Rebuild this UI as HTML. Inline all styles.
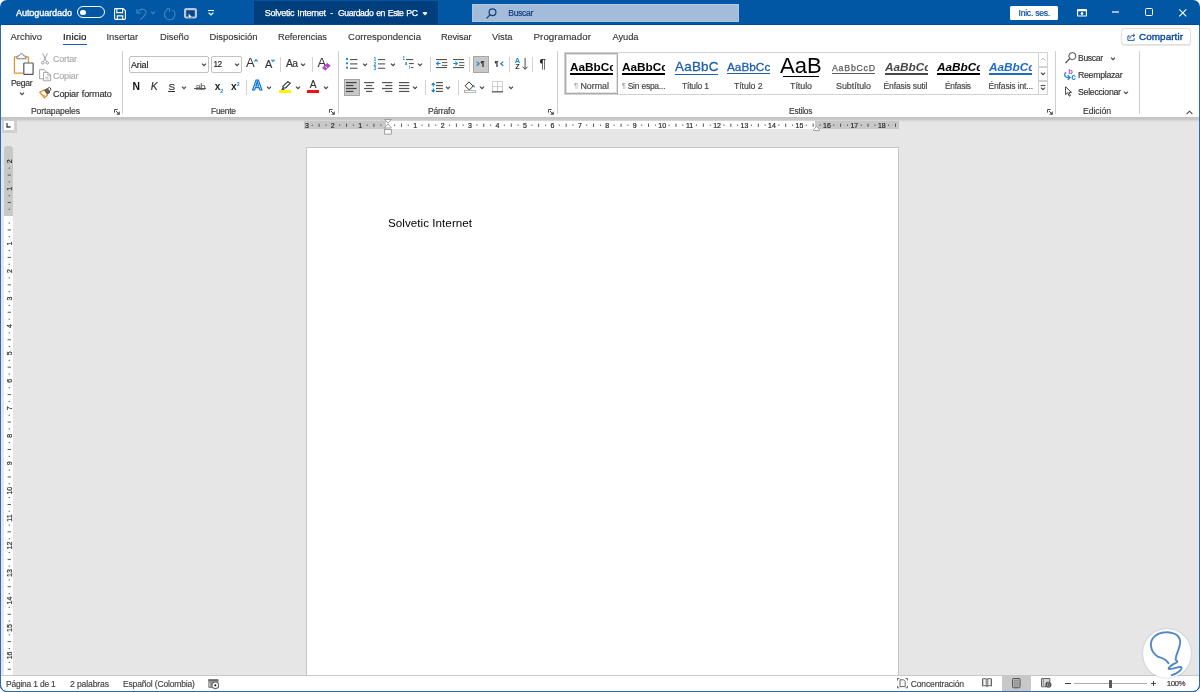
<!DOCTYPE html>
<html lang="es"><head><meta charset="utf-8"><title>Solvetic Internet - Word</title>
<style>
html,body{margin:0;padding:0;background:#fff;}
body{width:1200px;height:692px;overflow:hidden;position:relative;font-family:'Liberation Sans',sans-serif;}
#win{position:absolute;left:0;top:0;width:1200px;height:692px;background:#0157A3;border-radius:7px;overflow:hidden;will-change:transform;}
.t{position:absolute;white-space:pre;height:16px;line-height:16px;}
.r{position:absolute;}
.i{position:absolute;overflow:visible;}
#ribbon{position:absolute;left:1px;top:25.3px;width:1198px;height:91.7px;background:#fff;}
#doc{position:absolute;left:1px;top:117px;width:1198px;height:559px;background:#e6e6e6;}
#status{position:absolute;left:1px;top:675px;width:1198px;height:15.9px;background:#fff;border-top:1px solid #c8c8c8;box-sizing:border-box;border-radius:0 0 6px 6px;}
.clip{position:absolute;overflow:hidden;}
</style></head><body><div id="win">
<div class="r" style="left:0px;top:24px;width:1200px;height:1.4px;background:#014A8F;"></div><div class="r" style="left:254.2px;top:0.8px;width:183.6px;height:23.4px;background:#003E7D;"></div><span class="t" style="left:16.0px;top:5.0px;font-size:9.14px;color:#fff;font-weight:400;font-style:normal;font-family:'Liberation Sans',sans-serif;letter-spacing:-0.12px;-webkit-text-stroke:0.3px #fff;">Autoguardado</span><div class="r" style="left:77.3px;top:6.4px;width:27.4px;height:11.7px;border:1.3px solid #fff;border-radius:7px;box-sizing:border-box"></div><div class="r" style="left:80.2px;top:9.5px;width:5.6px;height:5.6px;border-radius:3px;background:#fff"></div><span class="t" style="left:264.8px;top:5.0px;font-size:9.01px;color:#fff;font-weight:400;font-style:normal;font-family:'Liberation Sans',sans-serif;letter-spacing:-0.26px;-webkit-text-stroke:0.25px #fff;word-spacing:0.8px;">Solvetic Internet</span><span class="t" style="left:330.3px;top:5.0px;font-size:9px;color:#fff;font-weight:400;font-style:normal;font-family:'Liberation Sans',sans-serif;letter-spacing:0.00px;-webkit-text-stroke:0.16px #fff;">-</span><span class="t" style="left:338.0px;top:5.0px;font-size:8.71px;color:#fff;font-weight:400;font-style:normal;font-family:'Liberation Sans',sans-serif;letter-spacing:-0.42px;-webkit-text-stroke:0.25px #fff;word-spacing:0.8px;">Guardado en Este PC</span><svg class="i" style="left:422px;top:11.9px;" width="6" height="4" viewBox="0 0 6 4"><path d="M1 0.7 L3 2.7 L5 0.7" fill="none" stroke="#fff" stroke-width="1.2"/></svg><div class="r" style="left:471.8px;top:4.3px;width:267.4px;height:17.6px;background:#A2BCD9;box-shadow:inset 0 0 0 0.8px #B4C8E0"></div><span class="t" style="left:508.3px;top:5.0px;font-size:8.59px;color:#153E7E;font-weight:400;font-style:normal;font-family:'Liberation Sans',sans-serif;letter-spacing:-0.34px;-webkit-text-stroke:0.2px #153E7E;">Buscar</span><div class="r" style="left:1010px;top:5.8px;width:48.3px;height:13.9px;background:#fff;border-radius:1.5px"></div><span class="t" style="left:1018.5px;top:4.9px;font-size:8.59px;color:#04509A;font-weight:400;font-style:normal;font-family:'Liberation Sans',sans-serif;letter-spacing:-0.24px;-webkit-text-stroke:0.2px #04509A;">Inic. ses.</span><div id="ribbon"></div><div class="r" style="left:0px;top:26px;width:1px;height:666px;background:#2A6CB2;"></div><div class="r" style="left:1199px;top:26px;width:1px;height:666px;background:#2A6CB2;"></div><span class="t" style="left:10.5px;top:29.0px;font-size:9.47px;color:#333;font-weight:400;font-style:normal;font-family:'Liberation Sans',sans-serif;letter-spacing:-0.01px;-webkit-text-stroke:0.12px #333;">Archivo</span><span class="t" style="left:63.0px;top:29.0px;font-size:9.83px;color:#1a1a1a;font-weight:400;font-style:normal;font-family:'Liberation Sans',sans-serif;letter-spacing:0.11px;-webkit-text-stroke:0.22px #1a1a1a;">Inicio</span><span class="t" style="left:106.5px;top:29.0px;font-size:9.37px;color:#333;font-weight:400;font-style:normal;font-family:'Liberation Sans',sans-serif;letter-spacing:-0.03px;-webkit-text-stroke:0.12px #333;">Insertar</span><span class="t" style="left:160.0px;top:29.0px;font-size:9.39px;color:#333;font-weight:400;font-style:normal;font-family:'Liberation Sans',sans-serif;letter-spacing:-0.04px;-webkit-text-stroke:0.12px #333;">Diseño</span><span class="t" style="left:209.5px;top:29.0px;font-size:9.43px;color:#333;font-weight:400;font-style:normal;font-family:'Liberation Sans',sans-serif;letter-spacing:-0.02px;-webkit-text-stroke:0.12px #333;">Disposición</span><span class="t" style="left:278.0px;top:29.0px;font-size:9.31px;color:#333;font-weight:400;font-style:normal;font-family:'Liberation Sans',sans-serif;letter-spacing:-0.06px;-webkit-text-stroke:0.12px #333;">Referencias</span><span class="t" style="left:348.0px;top:29.0px;font-size:9.55px;color:#333;font-weight:400;font-style:normal;font-family:'Liberation Sans',sans-serif;letter-spacing:0.02px;-webkit-text-stroke:0.12px #333;">Correspondencia</span><span class="t" style="left:441.0px;top:29.0px;font-size:9.2px;color:#333;font-weight:400;font-style:normal;font-family:'Liberation Sans',sans-serif;letter-spacing:-0.11px;-webkit-text-stroke:0.12px #333;">Revisar</span><span class="t" style="left:492.0px;top:29.0px;font-size:9.38px;color:#333;font-weight:400;font-style:normal;font-family:'Liberation Sans',sans-serif;letter-spacing:-0.05px;-webkit-text-stroke:0.12px #333;">Vista</span><span class="t" style="left:533.5px;top:29.0px;font-size:9.71px;color:#333;font-weight:400;font-style:normal;font-family:'Liberation Sans',sans-serif;letter-spacing:0.09px;-webkit-text-stroke:0.12px #333;">Programador</span><span class="t" style="left:612.5px;top:29.0px;font-size:9.34px;color:#333;font-weight:400;font-style:normal;font-family:'Liberation Sans',sans-serif;letter-spacing:-0.07px;-webkit-text-stroke:0.12px #333;">Ayuda</span><div class="r" style="left:63px;top:43.5px;width:24.2px;height:1.8px;background:#185ABD;"></div><div class="r" style="left:1121.2px;top:27.5px;width:69.4px;height:17.5px;border:1px solid #e0e0e0;border-radius:3.5px;box-sizing:border-box;background:#fff;box-shadow:0 0.8px 1px rgba(0,0,0,.10)"></div><span class="t" style="left:1139.0px;top:28.6px;font-size:9.9px;color:#114E9E;font-weight:400;font-style:normal;font-family:'Liberation Sans',sans-serif;letter-spacing:0.08px;-webkit-text-stroke:0.42px #114E9E;">Compartir</span><span class="t" style="left:31.0px;top:103.3px;font-size:8.58px;color:#3a3a3a;font-weight:400;font-style:normal;font-family:'Liberation Sans',sans-serif;letter-spacing:-0.14px;-webkit-text-stroke:0.16px #3a3a3a;">Portapapeles</span><span class="t" style="left:211.0px;top:103.3px;font-size:8.4px;color:#3a3a3a;font-weight:400;font-style:normal;font-family:'Liberation Sans',sans-serif;letter-spacing:-0.22px;-webkit-text-stroke:0.16px #3a3a3a;">Fuente</span><span class="t" style="left:428.0px;top:103.3px;font-size:8.53px;color:#3a3a3a;font-weight:400;font-style:normal;font-family:'Liberation Sans',sans-serif;letter-spacing:-0.16px;-webkit-text-stroke:0.16px #3a3a3a;">Párrafo</span><span class="t" style="left:789.0px;top:103.3px;font-size:8.37px;color:#3a3a3a;font-weight:400;font-style:normal;font-family:'Liberation Sans',sans-serif;letter-spacing:-0.19px;-webkit-text-stroke:0.16px #3a3a3a;">Estilos</span><span class="t" style="left:1083.0px;top:103.3px;font-size:8.72px;color:#3a3a3a;font-weight:400;font-style:normal;font-family:'Liberation Sans',sans-serif;letter-spacing:-0.10px;-webkit-text-stroke:0.16px #3a3a3a;">Edición</span><div class="r" style="left:122.0px;top:50.5px;width:1px;height:63.5px;background:#cfcfcf;"></div><div class="r" style="left:337.5px;top:50.5px;width:1px;height:63.5px;background:#cfcfcf;"></div><div class="r" style="left:556.5px;top:50.5px;width:1px;height:63.5px;background:#cfcfcf;"></div><div class="r" style="left:1055.0px;top:50.5px;width:1px;height:63.5px;background:#cfcfcf;"></div><div class="r" style="left:1139.0px;top:50.5px;width:1px;height:63.5px;background:#cfcfcf;"></div><span class="t" style="left:11.0px;top:75.0px;font-size:8.6px;color:#333;font-weight:400;font-style:normal;font-family:'Liberation Sans',sans-serif;letter-spacing:-0.36px;-webkit-text-stroke:0.16px #333;">Pegar</span><svg class="i" style="left:19px;top:92.4px;" width="6" height="4" viewBox="0 0 6 4"><path d="M1 0.7 L3 2.7 L5 0.7" fill="none" stroke="#444" stroke-width="1.2"/></svg><span class="t" style="left:53.0px;top:51.0px;font-size:8.97px;color:#ababab;font-weight:400;font-style:normal;font-family:'Liberation Sans',sans-serif;letter-spacing:-0.18px;-webkit-text-stroke:0.16px #ababab;">Cortar</span><span class="t" style="left:53.0px;top:68.2px;font-size:8.98px;color:#ababab;font-weight:400;font-style:normal;font-family:'Liberation Sans',sans-serif;letter-spacing:-0.18px;-webkit-text-stroke:0.16px #ababab;">Copiar</span><span class="t" style="left:53.0px;top:85.8px;font-size:9.07px;color:#2e2e2e;font-weight:400;font-style:normal;font-family:'Liberation Sans',sans-serif;letter-spacing:-0.14px;word-spacing:0.6px;-webkit-text-stroke:0.16px #2e2e2e;">Copiar formato</span><div class="r" style="left:128.5px;top:56px;width:80.5px;height:16.5px;border:1px solid #c2c2c2;border-radius:2px;box-sizing:border-box;background:#fff"></div><div class="r" style="left:211px;top:56px;width:31px;height:16.5px;border:1px solid #c2c2c2;border-radius:2px;box-sizing:border-box;background:#fff"></div><span class="t" style="left:131.0px;top:57.0px;font-size:9.01px;color:#222;font-weight:400;font-style:normal;font-family:'Liberation Sans',sans-serif;letter-spacing:-0.15px;-webkit-text-stroke:0.16px #222;">Arial</span><span class="t" style="left:213.5px;top:57.0px;font-size:8.21px;color:#222;font-weight:400;font-style:normal;font-family:'Liberation Sans',sans-serif;letter-spacing:-0.60px;-webkit-text-stroke:0.16px #222;">12</span><svg class="i" style="left:201.4px;top:63.1px;" width="6" height="4" viewBox="0 0 6 4"><path d="M1 0.7 L3 2.7 L5 0.7" fill="none" stroke="#444" stroke-width="1.2"/></svg><svg class="i" style="left:234px;top:63.1px;" width="6" height="4" viewBox="0 0 6 4"><path d="M1 0.7 L3 2.7 L5 0.7" fill="none" stroke="#444" stroke-width="1.2"/></svg><span class="t" style="left:246.0px;top:54.7px;font-size:13px;color:#333;font-weight:400;font-style:normal;font-family:'Liberation Sans',sans-serif;letter-spacing:0.00px;">A</span><span class="t" style="left:265.0px;top:55.5px;font-size:10.9px;color:#333;font-weight:400;font-style:normal;font-family:'Liberation Sans',sans-serif;letter-spacing:0.00px;-webkit-text-stroke:0.16px #333;">A</span><div class="r" style="left:279.5px;top:56.6px;width:1px;height:15px;background:#d2d2d2;"></div><span class="t" style="left:286.0px;top:55.7px;font-size:10.3px;color:#333;font-weight:400;font-style:normal;font-family:'Liberation Sans',sans-serif;letter-spacing:-0.60px;-webkit-text-stroke:0.16px #333;">Aa</span><svg class="i" style="left:299.7px;top:63.1px;" width="6" height="4" viewBox="0 0 6 4"><path d="M1 0.7 L3 2.7 L5 0.7" fill="none" stroke="#444" stroke-width="1.2"/></svg><div class="r" style="left:312.3px;top:56.6px;width:1px;height:15px;background:#d2d2d2;"></div><span class="t" style="left:317.6px;top:54.7px;font-size:13px;color:#333;font-weight:400;font-style:normal;font-family:'Liberation Sans',sans-serif;letter-spacing:0.00px;">A</span><span class="t" style="left:132.4px;top:79.0px;font-size:10.3px;color:#111;font-weight:700;font-style:normal;font-family:'Liberation Sans',sans-serif;letter-spacing:0.00px;">N</span><span class="t" style="left:150.7px;top:79.0px;font-size:10.4px;color:#333;font-weight:400;font-style:italic;font-family:'Liberation Sans',sans-serif;letter-spacing:0.00px;-webkit-text-stroke:0.16px #333;">K</span><span class="t" style="left:168.6px;top:78.8px;font-size:9.9px;color:#333;font-weight:400;font-style:normal;font-family:'Liberation Sans',sans-serif;letter-spacing:0.00px;-webkit-text-stroke:0.16px #333;">S</span><div class="r" style="left:168.4px;top:91.2px;width:6.4px;height:0.9px;background:#333;"></div><svg class="i" style="left:181.2px;top:85.7px;" width="6" height="4" viewBox="0 0 6 4"><path d="M1 0.7 L3 2.7 L5 0.7" fill="none" stroke="#444" stroke-width="1.2"/></svg><span class="t" style="left:195.6px;top:79.3px;font-size:9.6px;color:#666;font-weight:400;font-style:normal;font-family:'Liberation Sans',sans-serif;letter-spacing:-0.60px;-webkit-text-stroke:0.16px #666;">ab</span><div class="r" style="left:194.3px;top:88px;width:11.7px;height:0.8px;background:#555;"></div><span class="t" style="left:214.7px;top:79.3px;font-size:10.2px;color:#222;font-weight:700;font-style:normal;font-family:'Liberation Sans',sans-serif;letter-spacing:0.00px;">x</span><span class="t" style="left:220.2px;top:83.3px;font-size:5.4px;color:#1A85DD;font-weight:700;font-style:normal;font-family:'Liberation Sans',sans-serif;letter-spacing:0.00px;">2</span><span class="t" style="left:231.0px;top:79.3px;font-size:10.2px;color:#222;font-weight:700;font-style:normal;font-family:'Liberation Sans',sans-serif;letter-spacing:0.00px;">x</span><span class="t" style="left:236.8px;top:75.6px;font-size:5.4px;color:#1A85DD;font-weight:700;font-style:normal;font-family:'Liberation Sans',sans-serif;letter-spacing:0.00px;">2</span><div class="r" style="left:245.5px;top:80.3px;width:1px;height:15px;background:#d2d2d2;"></div><span class="t" style="left:252.2px;top:78.4px;font-size:13.8px;color:#fff;font-weight:700;font-style:normal;font-family:'Liberation Sans',sans-serif;letter-spacing:0.00px;-webkit-text-stroke:1.2px #0F74D4;">A</span><svg class="i" style="left:265.5px;top:85.7px;" width="6" height="4" viewBox="0 0 6 4"><path d="M1 0.7 L3 2.7 L5 0.7" fill="none" stroke="#444" stroke-width="1.2"/></svg><div class="r" style="left:279px;top:90px;width:12.1px;height:3px;background:#FFF200;"></div><svg class="i" style="left:294.7px;top:85.7px;" width="6" height="4" viewBox="0 0 6 4"><path d="M1 0.7 L3 2.7 L5 0.7" fill="none" stroke="#444" stroke-width="1.2"/></svg><span class="t" style="left:309.8px;top:77.3px;font-size:10.2px;color:#333;font-weight:400;font-style:normal;font-family:'Liberation Sans',sans-serif;letter-spacing:0.00px;-webkit-text-stroke:0.16px #333;">A</span><div class="r" style="left:307.2px;top:90px;width:11.8px;height:3px;background:#F01010;"></div><svg class="i" style="left:322.8px;top:85.7px;" width="6" height="4" viewBox="0 0 6 4"><path d="M1 0.7 L3 2.7 L5 0.7" fill="none" stroke="#444" stroke-width="1.2"/></svg><div class="r" style="left:473px;top:56px;width:16px;height:16.5px;background:#c8c8c8;border:1px solid #a6a6a6;box-sizing:border-box"></div><div class="r" style="left:344px;top:79.2px;width:15.8px;height:16.5px;background:#c8c8c8;border:1px solid #a6a6a6;box-sizing:border-box"></div><div class="r" style="left:429.5px;top:56.5px;width:1px;height:15px;background:#d2d2d2;"></div><div class="r" style="left:469.2px;top:56.5px;width:1px;height:15px;background:#d2d2d2;"></div><div class="r" style="left:509.3px;top:56.5px;width:1px;height:15px;background:#d2d2d2;"></div><div class="r" style="left:532.0px;top:56.5px;width:1px;height:15px;background:#d2d2d2;"></div><div class="r" style="left:425.1px;top:80.3px;width:1px;height:15px;background:#d2d2d2;"></div><div class="r" style="left:457.8px;top:80.3px;width:1px;height:15px;background:#d2d2d2;"></div><svg class="i" style="left:361.6px;top:62.699999999999996px;" width="6" height="4" viewBox="0 0 6 4"><path d="M1 0.7 L3 2.7 L5 0.7" fill="none" stroke="#444" stroke-width="1.2"/></svg><svg class="i" style="left:390px;top:62.699999999999996px;" width="6" height="4" viewBox="0 0 6 4"><path d="M1 0.7 L3 2.7 L5 0.7" fill="none" stroke="#444" stroke-width="1.2"/></svg><svg class="i" style="left:416.8px;top:62.699999999999996px;" width="6" height="4" viewBox="0 0 6 4"><path d="M1 0.7 L3 2.7 L5 0.7" fill="none" stroke="#444" stroke-width="1.2"/></svg><svg class="i" style="left:412.4px;top:85.7px;" width="6" height="4" viewBox="0 0 6 4"><path d="M1 0.7 L3 2.7 L5 0.7" fill="none" stroke="#444" stroke-width="1.2"/></svg><svg class="i" style="left:444.8px;top:85.7px;" width="6" height="4" viewBox="0 0 6 4"><path d="M1 0.7 L3 2.7 L5 0.7" fill="none" stroke="#444" stroke-width="1.2"/></svg><svg class="i" style="left:479.3px;top:85.7px;" width="6" height="4" viewBox="0 0 6 4"><path d="M1 0.7 L3 2.7 L5 0.7" fill="none" stroke="#444" stroke-width="1.2"/></svg><svg class="i" style="left:507.5px;top:85.7px;" width="6" height="4" viewBox="0 0 6 4"><path d="M1 0.7 L3 2.7 L5 0.7" fill="none" stroke="#444" stroke-width="1.2"/></svg><svg class="i" style="left:349.6px;top:58.7px;" width="10" height="13.049999999999999" viewBox="0 0 10 13.049999999999999"><rect x="0" y="0.0" width="7.5" height="1.1" fill="#555"/><rect x="0" y="4.35" width="7.5" height="1.1" fill="#555"/><rect x="0" y="8.7" width="7.5" height="1.1" fill="#555"/></svg><svg class="i" style="left:346px;top:58.3px;" width="2" height="13.049999999999999" viewBox="0 0 2 13.049999999999999"><rect x="0" y="0.0" width="2" height="1.9" fill="#1A85DD"/><rect x="0" y="4.35" width="2" height="1.9" fill="#1A85DD"/><rect x="0" y="8.7" width="2" height="1.9" fill="#1A85DD"/></svg><svg class="i" style="left:378px;top:58.7px;" width="10" height="13.049999999999999" viewBox="0 0 10 13.049999999999999"><rect x="0" y="0.0" width="7.2" height="1.1" fill="#555"/><rect x="0" y="4.35" width="7.2" height="1.1" fill="#555"/><rect x="0" y="8.7" width="7.2" height="1.1" fill="#555"/></svg><span class="t" style="left:373.6px;top:51.3px;font-size:5.2px;color:#1A85DD;font-weight:700;font-style:normal;font-family:'Liberation Sans',sans-serif;letter-spacing:0.00px;">1</span><span class="t" style="left:373.6px;top:55.6px;font-size:5.2px;color:#1A85DD;font-weight:700;font-style:normal;font-family:'Liberation Sans',sans-serif;letter-spacing:0.00px;">2</span><span class="t" style="left:373.6px;top:60.0px;font-size:5.2px;color:#1A85DD;font-weight:700;font-style:normal;font-family:'Liberation Sans',sans-serif;letter-spacing:0.00px;">3</span><svg class="i" style="left:406.2px;top:58.7px;" width="10" height="4.35" viewBox="0 0 10 4.35"><rect x="0" y="0.0" width="7.2" height="1.1" fill="#555"/></svg><svg class="i" style="left:408.6px;top:63.05px;" width="10" height="4.35" viewBox="0 0 10 4.35"><rect x="0" y="0.0" width="4.8" height="1.1" fill="#555"/></svg><svg class="i" style="left:411.4px;top:67.4px;" width="10" height="4.35" viewBox="0 0 10 4.35"><rect x="0" y="0.0" width="2.4" height="1.1" fill="#555"/></svg><span class="t" style="left:402.6px;top:51.3px;font-size:4.6px;color:#1A85DD;font-weight:700;font-style:normal;font-family:'Liberation Sans',sans-serif;letter-spacing:0.00px;">1</span><span class="t" style="left:404.8px;top:55.6px;font-size:4.6px;color:#1A85DD;font-weight:700;font-style:normal;font-family:'Liberation Sans',sans-serif;letter-spacing:0.00px;">a</span><span class="t" style="left:409.0px;top:60.0px;font-size:4.6px;color:#1A85DD;font-weight:700;font-style:normal;font-family:'Liberation Sans',sans-serif;letter-spacing:0.00px;">i</span><svg class="i" style="left:436px;top:58.7px;" width="10" height="2.9" viewBox="0 0 10 2.9"><rect x="0" y="0.0" width="11" height="1.1" fill="#555"/></svg><svg class="i" style="left:441.6px;top:61.6px;" width="10" height="5.8" viewBox="0 0 10 5.8"><rect x="0" y="0.0" width="5.4" height="1.1" fill="#666"/><rect x="0" y="2.9" width="5.4" height="1.1" fill="#666"/></svg><svg class="i" style="left:436px;top:67.4px;" width="10" height="2.9" viewBox="0 0 10 2.9"><rect x="0" y="0.0" width="11" height="1.1" fill="#555"/></svg><svg class="i" style="left:436.2px;top:61.2px;" width="5" height="5" viewBox="0 0 5 5"><path d="M4.6 2.5H0.9M2.5 0.6L0.6 2.5L2.5 4.4" fill="none" stroke="#1A85DD" stroke-width="1.1"/></svg><svg class="i" style="left:453.2px;top:58.7px;" width="10" height="2.9" viewBox="0 0 10 2.9"><rect x="0" y="0.0" width="11" height="1.1" fill="#555"/></svg><svg class="i" style="left:458.8px;top:61.6px;" width="10" height="5.8" viewBox="0 0 10 5.8"><rect x="0" y="0.0" width="5.4" height="1.1" fill="#666"/><rect x="0" y="2.9" width="5.4" height="1.1" fill="#666"/></svg><svg class="i" style="left:453.2px;top:67.4px;" width="10" height="2.9" viewBox="0 0 10 2.9"><rect x="0" y="0.0" width="11" height="1.1" fill="#555"/></svg><svg class="i" style="left:453.4px;top:61.2px;" width="5" height="5" viewBox="0 0 5 5"><path d="M0.3 2.5H4M2.4 0.6L4.3 2.5L2.4 4.4" fill="none" stroke="#1A85DD" stroke-width="1.1"/></svg><span class="t" style="left:480.6px;top:56.3px;font-size:7.6px;color:#222;font-weight:700;font-style:normal;font-family:'Liberation Sans',sans-serif;letter-spacing:0.00px;">¶</span><svg class="i" style="left:476.4px;top:61.4px;" width="4" height="5.4" viewBox="0 0 4 5.4"><path d="M0.6 0.6L3.2 2.7L0.6 4.8" fill="none" stroke="#1A85DD" stroke-width="1.2"/></svg><span class="t" style="left:494.5px;top:56.3px;font-size:7.6px;color:#222;font-weight:700;font-style:normal;font-family:'Liberation Sans',sans-serif;letter-spacing:0.00px;">¶</span><svg class="i" style="left:500px;top:61.4px;" width="4" height="5.4" viewBox="0 0 4 5.4"><path d="M3.3 0.6L0.7 2.7L3.3 4.8" fill="none" stroke="#1A85DD" stroke-width="1.2"/></svg><span class="t" style="left:514.8px;top:52.8px;font-size:7.4px;color:#1A85DD;font-weight:700;font-style:normal;font-family:'Liberation Sans',sans-serif;letter-spacing:0.00px;">A</span><span class="t" style="left:515.2px;top:59.4px;font-size:7.2px;color:#333;font-weight:700;font-style:normal;font-family:'Liberation Sans',sans-serif;letter-spacing:0.00px;">Z</span><svg class="i" style="left:521.5px;top:58px;" width="6.4" height="12" viewBox="0 0 6.4 12"><path d="M3.1 0V11.2M0.5 8.6L3.1 11.3L5.7 8.6" fill="none" stroke="#444" stroke-width="1"/></svg><span class="t" style="left:539.6px;top:56.0px;font-size:12px;color:#222;font-weight:400;font-style:normal;font-family:'Liberation Sans',sans-serif;letter-spacing:0.00px;">¶</span><svg class="i" style="left:346.4px;top:82px;" width="10" height="11.8" viewBox="0 0 10 11.8"><rect x="0" y="0.0" width="10.6" height="1.2" fill="#444"/><rect x="0" y="2.95" width="7.4" height="1.2" fill="#444"/><rect x="0" y="5.9" width="10.6" height="1.2" fill="#444"/><rect x="0" y="8.850000000000001" width="7.4" height="1.2" fill="#444"/></svg><svg class="i" style="left:364px;top:82px;" width="10.2" height="11.8" viewBox="0 0 10.2 11.8"><rect x="0.0" y="0.0" width="10.2" height="1.2" fill="#555"/><rect x="1.9999999999999996" y="2.95" width="6.2" height="1.2" fill="#555"/><rect x="0.0" y="5.9" width="10.2" height="1.2" fill="#555"/><rect x="1.9999999999999996" y="8.850000000000001" width="6.2" height="1.2" fill="#555"/></svg><svg class="i" style="left:381.5px;top:82px;" width="10.3" height="11.8" viewBox="0 0 10.3 11.8"><rect x="0.0" y="0.0" width="10.3" height="1.2" fill="#555"/><rect x="3.200000000000001" y="2.95" width="7.1" height="1.2" fill="#555"/><rect x="0.0" y="5.9" width="10.3" height="1.2" fill="#555"/><rect x="3.200000000000001" y="8.850000000000001" width="7.1" height="1.2" fill="#555"/></svg><svg class="i" style="left:398.7px;top:82px;" width="10.3" height="11.8" viewBox="0 0 10.3 11.8"><rect x="0" y="0.0" width="10.3" height="1.2" fill="#555"/><rect x="0" y="2.95" width="10.3" height="1.2" fill="#555"/><rect x="0" y="5.9" width="10.3" height="1.2" fill="#555"/><rect x="0" y="8.850000000000001" width="10.3" height="1.2" fill="#555"/></svg><svg class="i" style="left:435.9px;top:82px;" width="6.9" height="11.8" viewBox="0 0 6.9 11.8"><rect x="0" y="0.0" width="6.9" height="1.2" fill="#555"/><rect x="0" y="2.95" width="6.9" height="1.2" fill="#555"/><rect x="0" y="5.9" width="6.9" height="1.2" fill="#555"/><rect x="0" y="8.850000000000001" width="6.9" height="1.2" fill="#555"/></svg><svg class="i" style="left:430.6px;top:81.8px;" width="4.6" height="11" viewBox="0 0 4.6 11"><path d="M2.3 1V4.6M2.3 6.4V10" stroke="#1A85DD" stroke-width="1.2"/><path d="M0 3L2.3 0.2L4.6 3Z M0 8L2.3 10.8L4.6 8Z" fill="#1A85DD"/></svg><svg class="i" style="left:463.8px;top:81px;" width="12" height="12" viewBox="0 0 12 12"><path d="M5 0.8L9.2 5.2L5.2 9L1.2 4.8Z" fill="#fff" stroke="#333" stroke-width="1"/><path d="M9.6 3.4C10.6 4.6 11 5.6 10.8 7.2C10.2 6.2 9.8 6 9 5.6Z" fill="#1A85DD"/><rect x="0.4" y="9.6" width="11" height="2.1" fill="#fff" stroke="#999" stroke-width="0.7"/></svg><svg class="i" style="left:492px;top:81.2px;" width="11" height="11.6" viewBox="0 0 11 11.6"><path d="M0.5 0.4V11M10.5 0.4V11M0.5 0.5H10.5M5.5 0.5V11M0.5 5.6H10.5" fill="none" stroke="#c4c4c4" stroke-width="0.8"/><path d="M0 10.8H11" stroke="#555" stroke-width="1.3"/></svg><div class="r" style="left:564px;top:51.5px;width:484px;height:43.5px;border:1px solid #d2d2d2;box-sizing:border-box;background:#fff"></div><div class="r" style="left:565.3px;top:53px;width:52.5px;height:41px;border:1.5px solid #ababab;box-sizing:border-box;background:#fff;box-shadow:inset 0 0 0 1px #e2e2e2"></div><div class="r" style="left:1037.5px;top:51.5px;width:10.5px;height:15px;border:1px solid #d2d2d2;box-sizing:border-box;background:#fff"></div><div class="r" style="left:1037.5px;top:66.5px;width:10.5px;height:14.5px;border:1px solid #d2d2d2;box-sizing:border-box;background:#fff"></div><div class="r" style="left:1037.5px;top:81px;width:10.5px;height:14px;border:1px solid #d2d2d2;box-sizing:border-box;background:#fff"></div><svg class="i" style="left:1040px;top:57.3px;" width="6" height="4" viewBox="0 0 6 4"><path d="M1 3.1L3 1.1L5 3.1" fill="none" stroke="#b8b8b8" stroke-width="1"/></svg><svg class="i" style="left:1040px;top:71.9px;" width="6" height="4" viewBox="0 0 6 4"><path d="M1 0.7 L3 2.7 L5 0.7" fill="none" stroke="#444" stroke-width="1.2"/></svg><svg class="i" style="left:1040px;top:84.5px;" width="6" height="6" viewBox="0 0 6 6"><path d="M0.6 0.6H5.4" stroke="#444" stroke-width="1"/><path d="M1 2.6L3 4.6L5 2.6" fill="none" stroke="#444" stroke-width="1.1"/></svg><div class="clip" style="left:570px;top:54px;width:43px;height:26px"><span class="t" style="left:0;top:0.7000000000000028px;font-size:11.8px;color:#000;font-weight:700;font-style:normal;letter-spacing:0px;height:24px;line-height:24px;">AaBbCc</span></div><div class="r" style="left:570px;top:73.3px;width:43px;height:1.5px;background:#000;"></div><div class="clip" style="left:622px;top:54px;width:43px;height:26px"><span class="t" style="left:0;top:0.7000000000000028px;font-size:11.8px;color:#000;font-weight:700;font-style:normal;letter-spacing:0px;height:24px;line-height:24px;">AaBbCc</span></div><div class="r" style="left:622px;top:73.3px;width:43px;height:1.5px;background:#000;"></div><div class="clip" style="left:675px;top:54px;width:43px;height:26px"><span class="t" style="left:0;top:1px;font-size:13.4px;color:#1E5CAE;font-weight:400;font-style:normal;letter-spacing:0.25px;height:24px;line-height:24px;-webkit-text-stroke:0.3px #1E5CAE;">AaBbC</span></div><div class="r" style="left:675px;top:73.6px;width:43px;height:1.5px;background:#1E5CAE;"></div><div class="clip" style="left:727px;top:54px;width:43px;height:26px"><span class="t" style="left:0;top:0.7000000000000028px;font-size:11.8px;color:#1E5CAE;font-weight:400;font-style:normal;letter-spacing:0px;height:24px;line-height:24px;-webkit-text-stroke:0.3px #1E5CAE;">AaBbCc</span></div><div class="r" style="left:727px;top:73px;width:43px;height:1.25px;background:#1E5CAE;"></div><div class="clip" style="left:780px;top:58px;width:42px;height:22px"><span class="t" style="left:0;top:-4.5px;font-size:22px;color:#000;font-weight:400;font-style:normal;letter-spacing:0px;height:24px;line-height:24px;">AaB</span></div><div class="r" style="left:783px;top:75.7px;width:36px;height:1.4px;background:#000;"></div><div class="clip" style="left:832px;top:54px;width:43px;height:26px"><span class="t" style="left:0;top:1.7999999999999972px;font-size:8.8px;color:#5A5A5A;font-weight:400;font-style:normal;letter-spacing:0.75px;height:24px;line-height:24px;-webkit-text-stroke:0.25px #5A5A5A;">AaBbCcD</span></div><div class="r" style="left:832px;top:73px;width:43px;height:1.1px;background:#5A5A5A;"></div><div class="clip" style="left:885px;top:54px;width:43px;height:26px"><span class="t" style="left:0;top:0.7000000000000028px;font-size:11.8px;color:#484848;font-weight:700;font-style:italic;letter-spacing:0px;height:24px;line-height:24px;">AaBbCc</span></div><div class="r" style="left:885px;top:73.3px;width:43px;height:1.5px;background:#484848;"></div><div class="clip" style="left:937px;top:54px;width:43px;height:26px"><span class="t" style="left:0;top:0.7000000000000028px;font-size:11.8px;color:#000;font-weight:700;font-style:italic;letter-spacing:0px;height:24px;line-height:24px;">AaBbCc</span></div><div class="r" style="left:937px;top:73.3px;width:43px;height:1.5px;background:#000;"></div><div class="clip" style="left:989px;top:54px;width:43px;height:26px"><span class="t" style="left:0;top:0.7000000000000028px;font-size:11.8px;color:#1E6ACB;font-weight:700;font-style:italic;letter-spacing:0px;height:24px;line-height:24px;">AaBbCc</span></div><div class="r" style="left:989px;top:73.3px;width:43px;height:1.5px;background:#1E6ACB;"></div><span class="t" style="left:574.0px;top:78.0px;font-size:7.5px;color:#aaa;font-weight:700;font-style:normal;font-family:'Liberation Sans',sans-serif;letter-spacing:0.00px;">¶</span><span class="t" style="left:580.5px;top:78.0px;font-size:8.88px;color:#444;font-weight:400;font-style:normal;font-family:'Liberation Sans',sans-serif;letter-spacing:-0.04px;-webkit-text-stroke:0.16px #444;">Normal</span><span class="t" style="left:621.8px;top:78.0px;font-size:7.5px;color:#aaa;font-weight:700;font-style:normal;font-family:'Liberation Sans',sans-serif;letter-spacing:0.00px;">¶</span><span class="t" style="left:627.7px;top:78.0px;font-size:8.39px;color:#444;font-weight:400;font-style:normal;font-family:'Liberation Sans',sans-serif;letter-spacing:-0.18px;-webkit-text-stroke:0.16px #444;">Sin espa...</span><span class="t" style="left:682.0px;top:78.0px;font-size:8.45px;color:#444;font-weight:400;font-style:normal;font-family:'Liberation Sans',sans-serif;letter-spacing:-0.16px;-webkit-text-stroke:0.16px #444;">Título 1</span><span class="t" style="left:734.0px;top:78.0px;font-size:8.72px;color:#444;font-weight:400;font-style:normal;font-family:'Liberation Sans',sans-serif;letter-spacing:-0.08px;-webkit-text-stroke:0.16px #444;">Título 2</span><span class="t" style="left:790.0px;top:78.0px;font-size:8.88px;color:#444;font-weight:400;font-style:normal;font-family:'Liberation Sans',sans-serif;letter-spacing:-0.04px;-webkit-text-stroke:0.16px #444;">Título</span><span class="t" style="left:836.0px;top:78.0px;font-size:8.92px;color:#444;font-weight:400;font-style:normal;font-family:'Liberation Sans',sans-serif;letter-spacing:-0.02px;-webkit-text-stroke:0.16px #444;">Subtítulo</span><span class="t" style="left:883.5px;top:78.0px;font-size:8.54px;color:#444;font-weight:400;font-style:normal;font-family:'Liberation Sans',sans-serif;letter-spacing:-0.13px;-webkit-text-stroke:0.16px #444;">Énfasis sutil</span><span class="t" style="left:945.0px;top:78.0px;font-size:8.34px;color:#444;font-weight:400;font-style:normal;font-family:'Liberation Sans',sans-serif;letter-spacing:-0.22px;-webkit-text-stroke:0.16px #444;">Énfasis</span><span class="t" style="left:988.5px;top:78.0px;font-size:8.49px;color:#444;font-weight:400;font-style:normal;font-family:'Liberation Sans',sans-serif;letter-spacing:-0.13px;-webkit-text-stroke:0.16px #444;">Énfasis int...</span><span class="t" style="left:1078.0px;top:50.0px;font-size:8.59px;color:#333;font-weight:400;font-style:normal;font-family:'Liberation Sans',sans-serif;letter-spacing:-0.34px;-webkit-text-stroke:0.16px #333;">Buscar</span><svg class="i" style="left:1110px;top:56.9px;" width="6" height="4" viewBox="0 0 6 4"><path d="M1 0.7 L3 2.7 L5 0.7" fill="none" stroke="#444" stroke-width="1.2"/></svg><span class="t" style="left:1078.0px;top:67.0px;font-size:8.74px;color:#333;font-weight:400;font-style:normal;font-family:'Liberation Sans',sans-serif;letter-spacing:-0.28px;-webkit-text-stroke:0.16px #333;">Reemplazar</span><span class="t" style="left:1078.0px;top:84.0px;font-size:8.72px;color:#333;font-weight:400;font-style:normal;font-family:'Liberation Sans',sans-serif;letter-spacing:-0.26px;-webkit-text-stroke:0.16px #333;">Seleccionar</span><svg class="i" style="left:1122.5px;top:90.9px;" width="6" height="4" viewBox="0 0 6 4"><path d="M1 0.7 L3 2.7 L5 0.7" fill="none" stroke="#444" stroke-width="1.2"/></svg><svg class="i" style="left:1185.5px;top:110px;" width="7" height="5" viewBox="0 0 7 5"><path d="M0.6 4.2L3.5 1.2L6.4 4.2" fill="none" stroke="#444" stroke-width="1.1"/></svg><svg class="i" style="left:114px;top:108.5px;" width="6" height="6" viewBox="0 0 6 6"><path d="M0.5 3.6V0.5H3.6" fill="none" stroke="#4a4a4a" stroke-width="1"/><path d="M2 2L4.6 4.6" fill="none" stroke="#4a4a4a" stroke-width="1"/><path d="M5.8 2.2V5.8H2.2Z" fill="#4a4a4a"/></svg><svg class="i" style="left:329px;top:108.5px;" width="6" height="6" viewBox="0 0 6 6"><path d="M0.5 3.6V0.5H3.6" fill="none" stroke="#4a4a4a" stroke-width="1"/><path d="M2 2L4.6 4.6" fill="none" stroke="#4a4a4a" stroke-width="1"/><path d="M5.8 2.2V5.8H2.2Z" fill="#4a4a4a"/></svg><svg class="i" style="left:548px;top:108.5px;" width="6" height="6" viewBox="0 0 6 6"><path d="M0.5 3.6V0.5H3.6" fill="none" stroke="#4a4a4a" stroke-width="1"/><path d="M2 2L4.6 4.6" fill="none" stroke="#4a4a4a" stroke-width="1"/><path d="M5.8 2.2V5.8H2.2Z" fill="#4a4a4a"/></svg><svg class="i" style="left:1047px;top:108.5px;" width="6" height="6" viewBox="0 0 6 6"><path d="M0.5 3.6V0.5H3.6" fill="none" stroke="#4a4a4a" stroke-width="1"/><path d="M2 2L4.6 4.6" fill="none" stroke="#4a4a4a" stroke-width="1"/><path d="M5.8 2.2V5.8H2.2Z" fill="#4a4a4a"/></svg><div id="doc"></div><div class="r" style="left:1px;top:117px;width:1198px;height:1px;background:#c2c2c2;"></div><div class="r" style="left:1px;top:118px;width:1198px;height:1.6px;background:#c8c8c8;"></div><div class="r" style="left:1px;top:119.6px;width:1198px;height:0.9px;background:#d6d6d6;"></div><div class="r" style="left:1px;top:120.5px;width:1198px;height:0.6px;background:#e0e0e0;"></div><div class="r" style="left:2px;top:119.6px;width:14.6px;height:13px;background:#d0d0d0;"></div><div class="r" style="left:3.5px;top:121.2px;width:10.5px;height:9px;background:#fff;"></div><svg class="i" style="left:6.2px;top:123.3px;" width="5" height="5" viewBox="0 0 5 5"><path d="M1 0V4H4.6" fill="none" stroke="#444" stroke-width="1.3"/></svg><div class="r" style="left:304px;top:121.2px;width:594.5px;height:7.8px;background:#fff;"></div><div class="r" style="left:304px;top:121.2px;width:81.69999999999999px;height:7.8px;background:#c8c8c8;"></div><div class="r" style="left:815px;top:121.2px;width:83.5px;height:7.8px;background:#c8c8c8;"></div><svg class="i" style="left:304px;top:121px;" width="594.5" height="9" viewBox="0 0 594.5 9"><text x="2.9" y="6.7" font-size="7" text-anchor="middle" fill="#2c2c2c" stroke="#2c2c2c" stroke-width="0.2" font-family="Liberation Sans,sans-serif">3</text><rect x="7.7" y="3.6" width="1.1" height="1.1" fill="#444"/><rect x="14.6" y="2.6" width="0.9" height="3.3" fill="#444"/><rect x="21.4" y="3.6" width="1.1" height="1.1" fill="#444"/><text x="28.8" y="6.7" font-size="7" text-anchor="middle" fill="#2c2c2c" stroke="#2c2c2c" stroke-width="0.2" font-family="Liberation Sans,sans-serif">2</text><rect x="35.1" y="3.6" width="1.1" height="1.1" fill="#444"/><rect x="42.1" y="2.6" width="0.9" height="3.3" fill="#444"/><rect x="48.8" y="3.6" width="1.1" height="1.1" fill="#444"/><text x="56.2" y="6.7" font-size="7" text-anchor="middle" fill="#2c2c2c" stroke="#2c2c2c" stroke-width="0.2" font-family="Liberation Sans,sans-serif">1</text><rect x="62.6" y="3.6" width="1.1" height="1.1" fill="#444"/><rect x="69.5" y="2.6" width="0.9" height="3.3" fill="#444"/><rect x="76.3" y="3.6" width="1.1" height="1.1" fill="#444"/><rect x="90.0" y="3.6" width="1.1" height="1.1" fill="#444"/><rect x="97.0" y="2.6" width="0.9" height="3.3" fill="#444"/><rect x="103.7" y="3.6" width="1.1" height="1.1" fill="#444"/><text x="111.1" y="6.7" font-size="7" text-anchor="middle" fill="#2c2c2c" stroke="#2c2c2c" stroke-width="0.2" font-family="Liberation Sans,sans-serif">1</text><rect x="117.5" y="3.6" width="1.1" height="1.1" fill="#444"/><rect x="124.4" y="2.6" width="0.9" height="3.3" fill="#444"/><rect x="131.2" y="3.6" width="1.1" height="1.1" fill="#444"/><text x="138.6" y="6.7" font-size="7" text-anchor="middle" fill="#2c2c2c" stroke="#2c2c2c" stroke-width="0.2" font-family="Liberation Sans,sans-serif">2</text><rect x="144.9" y="3.6" width="1.1" height="1.1" fill="#444"/><rect x="151.9" y="2.6" width="0.9" height="3.3" fill="#444"/><rect x="158.6" y="3.6" width="1.1" height="1.1" fill="#444"/><text x="166.0" y="6.7" font-size="7" text-anchor="middle" fill="#2c2c2c" stroke="#2c2c2c" stroke-width="0.2" font-family="Liberation Sans,sans-serif">3</text><rect x="172.4" y="3.6" width="1.1" height="1.1" fill="#444"/><rect x="179.3" y="2.6" width="0.9" height="3.3" fill="#444"/><rect x="186.1" y="3.6" width="1.1" height="1.1" fill="#444"/><text x="193.5" y="6.7" font-size="7" text-anchor="middle" fill="#2c2c2c" stroke="#2c2c2c" stroke-width="0.2" font-family="Liberation Sans,sans-serif">4</text><rect x="199.8" y="3.6" width="1.1" height="1.1" fill="#444"/><rect x="206.8" y="2.6" width="0.9" height="3.3" fill="#444"/><rect x="213.5" y="3.6" width="1.1" height="1.1" fill="#444"/><text x="221.0" y="6.7" font-size="7" text-anchor="middle" fill="#2c2c2c" stroke="#2c2c2c" stroke-width="0.2" font-family="Liberation Sans,sans-serif">5</text><rect x="227.3" y="3.6" width="1.1" height="1.1" fill="#444"/><rect x="234.2" y="2.6" width="0.9" height="3.3" fill="#444"/><rect x="241.0" y="3.6" width="1.1" height="1.1" fill="#444"/><text x="248.4" y="6.7" font-size="7" text-anchor="middle" fill="#2c2c2c" stroke="#2c2c2c" stroke-width="0.2" font-family="Liberation Sans,sans-serif">6</text><rect x="254.7" y="3.6" width="1.1" height="1.1" fill="#444"/><rect x="261.7" y="2.6" width="0.9" height="3.3" fill="#444"/><rect x="268.4" y="3.6" width="1.1" height="1.1" fill="#444"/><text x="275.9" y="6.7" font-size="7" text-anchor="middle" fill="#2c2c2c" stroke="#2c2c2c" stroke-width="0.2" font-family="Liberation Sans,sans-serif">7</text><rect x="282.2" y="3.6" width="1.1" height="1.1" fill="#444"/><rect x="289.1" y="2.6" width="0.9" height="3.3" fill="#444"/><rect x="295.9" y="3.6" width="1.1" height="1.1" fill="#444"/><text x="303.3" y="6.7" font-size="7" text-anchor="middle" fill="#2c2c2c" stroke="#2c2c2c" stroke-width="0.2" font-family="Liberation Sans,sans-serif">8</text><rect x="309.6" y="3.6" width="1.1" height="1.1" fill="#444"/><rect x="316.6" y="2.6" width="0.9" height="3.3" fill="#444"/><rect x="323.3" y="3.6" width="1.1" height="1.1" fill="#444"/><text x="330.8" y="6.7" font-size="7" text-anchor="middle" fill="#2c2c2c" stroke="#2c2c2c" stroke-width="0.2" font-family="Liberation Sans,sans-serif">9</text><rect x="337.1" y="3.6" width="1.1" height="1.1" fill="#444"/><rect x="344.0" y="2.6" width="0.9" height="3.3" fill="#444"/><rect x="350.8" y="3.6" width="1.1" height="1.1" fill="#444"/><text x="358.2" y="6.7" font-size="7" text-anchor="middle" fill="#2c2c2c" stroke="#2c2c2c" stroke-width="0.2" font-family="Liberation Sans,sans-serif">10</text><rect x="364.5" y="3.6" width="1.1" height="1.1" fill="#444"/><rect x="371.5" y="2.6" width="0.9" height="3.3" fill="#444"/><rect x="378.2" y="3.6" width="1.1" height="1.1" fill="#444"/><text x="385.6" y="6.7" font-size="7" text-anchor="middle" fill="#2c2c2c" stroke="#2c2c2c" stroke-width="0.2" font-family="Liberation Sans,sans-serif">11</text><rect x="392.0" y="3.6" width="1.1" height="1.1" fill="#444"/><rect x="398.9" y="2.6" width="0.9" height="3.3" fill="#444"/><rect x="405.7" y="3.6" width="1.1" height="1.1" fill="#444"/><text x="413.1" y="6.7" font-size="7" text-anchor="middle" fill="#2c2c2c" stroke="#2c2c2c" stroke-width="0.2" font-family="Liberation Sans,sans-serif">12</text><rect x="419.4" y="3.6" width="1.1" height="1.1" fill="#444"/><rect x="426.4" y="2.6" width="0.9" height="3.3" fill="#444"/><rect x="433.1" y="3.6" width="1.1" height="1.1" fill="#444"/><text x="440.5" y="6.7" font-size="7" text-anchor="middle" fill="#2c2c2c" stroke="#2c2c2c" stroke-width="0.2" font-family="Liberation Sans,sans-serif">13</text><rect x="446.9" y="3.6" width="1.1" height="1.1" fill="#444"/><rect x="453.8" y="2.6" width="0.9" height="3.3" fill="#444"/><rect x="460.6" y="3.6" width="1.1" height="1.1" fill="#444"/><text x="468.0" y="6.7" font-size="7" text-anchor="middle" fill="#2c2c2c" stroke="#2c2c2c" stroke-width="0.2" font-family="Liberation Sans,sans-serif">14</text><rect x="474.3" y="3.6" width="1.1" height="1.1" fill="#444"/><rect x="481.3" y="2.6" width="0.9" height="3.3" fill="#444"/><rect x="488.0" y="3.6" width="1.1" height="1.1" fill="#444"/><text x="495.5" y="6.7" font-size="7" text-anchor="middle" fill="#2c2c2c" stroke="#2c2c2c" stroke-width="0.2" font-family="Liberation Sans,sans-serif">15</text><rect x="501.8" y="3.6" width="1.1" height="1.1" fill="#444"/><rect x="508.7" y="2.6" width="0.9" height="3.3" fill="#444"/><rect x="515.5" y="3.6" width="1.1" height="1.1" fill="#444"/><text x="522.9" y="6.7" font-size="7" text-anchor="middle" fill="#2c2c2c" stroke="#2c2c2c" stroke-width="0.2" font-family="Liberation Sans,sans-serif">16</text><rect x="529.2" y="3.6" width="1.1" height="1.1" fill="#444"/><rect x="536.2" y="2.6" width="0.9" height="3.3" fill="#444"/><rect x="542.9" y="3.6" width="1.1" height="1.1" fill="#444"/><text x="550.3" y="6.7" font-size="7" text-anchor="middle" fill="#2c2c2c" stroke="#2c2c2c" stroke-width="0.2" font-family="Liberation Sans,sans-serif">17</text><rect x="556.7" y="3.6" width="1.1" height="1.1" fill="#444"/><rect x="563.6" y="2.6" width="0.9" height="3.3" fill="#444"/><rect x="570.4" y="3.6" width="1.1" height="1.1" fill="#444"/><text x="577.8" y="6.7" font-size="7" text-anchor="middle" fill="#2c2c2c" stroke="#2c2c2c" stroke-width="0.2" font-family="Liberation Sans,sans-serif">18</text><rect x="584.1" y="3.6" width="1.1" height="1.1" fill="#444"/><rect x="591.1" y="2.6" width="0.9" height="3.3" fill="#444"/></svg><svg class="i" style="left:383.5px;top:119px;" width="8" height="16" viewBox="0 0 8 16"><path d="M0.7 0.5H7.3L4 4.3Z M4 5L7.3 8.6V9H0.7V8.6Z" fill="#fff" stroke="#8a8a8a" stroke-width="0.8"/><rect x="0.7" y="10.5" width="6.6" height="4.6" fill="#fff" stroke="#8a8a8a" stroke-width="0.8"/></svg><svg class="i" style="left:812.5px;top:125.5px;" width="7" height="5" viewBox="0 0 7 5"><path d="M3.5 0.5L6.5 3.5V4.5H0.5V3.5Z" fill="#fff" stroke="#8a8a8a" stroke-width="0.8"/></svg><div class="r" style="left:4px;top:146px;width:8.5px;height:530px;background:#fff;"></div><div class="r" style="left:4px;top:146px;width:8.5px;height:70.19999999999999px;background:#c8c8c8;border-radius:2px 2px 0 0"></div><svg class="i" style="left:4px;top:146px;" width="9" height="530" viewBox="0 0 9 530"><text transform="translate(7.7,15.3) rotate(-90)" font-size="7" text-anchor="middle" fill="#2c2c2c" stroke="#2c2c2c" stroke-width="0.2" font-family="Liberation Sans,sans-serif">2</text><rect x="4.7" y="21.6" width="1.1" height="1.1" fill="#444"/><rect x="3.6" y="28.6" width="3.3" height="0.9" fill="#444"/><rect x="4.7" y="35.3" width="1.1" height="1.1" fill="#444"/><text transform="translate(7.7,42.8) rotate(-90)" font-size="7" text-anchor="middle" fill="#2c2c2c" stroke="#2c2c2c" stroke-width="0.2" font-family="Liberation Sans,sans-serif">1</text><rect x="4.7" y="49.1" width="1.1" height="1.1" fill="#444"/><rect x="3.6" y="56.0" width="3.3" height="0.9" fill="#444"/><rect x="4.7" y="62.8" width="1.1" height="1.1" fill="#444"/><rect x="4.7" y="76.5" width="1.1" height="1.1" fill="#444"/><rect x="3.6" y="83.5" width="3.3" height="0.9" fill="#444"/><rect x="4.7" y="90.2" width="1.1" height="1.1" fill="#444"/><text transform="translate(7.7,97.6) rotate(-90)" font-size="7" text-anchor="middle" fill="#2c2c2c" stroke="#2c2c2c" stroke-width="0.2" font-family="Liberation Sans,sans-serif">1</text><rect x="4.7" y="104.0" width="1.1" height="1.1" fill="#444"/><rect x="3.6" y="110.9" width="3.3" height="0.9" fill="#444"/><rect x="4.7" y="117.7" width="1.1" height="1.1" fill="#444"/><text transform="translate(7.7,125.1) rotate(-90)" font-size="7" text-anchor="middle" fill="#2c2c2c" stroke="#2c2c2c" stroke-width="0.2" font-family="Liberation Sans,sans-serif">2</text><rect x="4.7" y="131.4" width="1.1" height="1.1" fill="#444"/><rect x="3.6" y="138.4" width="3.3" height="0.9" fill="#444"/><rect x="4.7" y="145.1" width="1.1" height="1.1" fill="#444"/><text transform="translate(7.7,152.5) rotate(-90)" font-size="7" text-anchor="middle" fill="#2c2c2c" stroke="#2c2c2c" stroke-width="0.2" font-family="Liberation Sans,sans-serif">3</text><rect x="4.7" y="158.9" width="1.1" height="1.1" fill="#444"/><rect x="3.6" y="165.8" width="3.3" height="0.9" fill="#444"/><rect x="4.7" y="172.6" width="1.1" height="1.1" fill="#444"/><text transform="translate(7.7,180.0) rotate(-90)" font-size="7" text-anchor="middle" fill="#2c2c2c" stroke="#2c2c2c" stroke-width="0.2" font-family="Liberation Sans,sans-serif">4</text><rect x="4.7" y="186.3" width="1.1" height="1.1" fill="#444"/><rect x="3.6" y="193.3" width="3.3" height="0.9" fill="#444"/><rect x="4.7" y="200.0" width="1.1" height="1.1" fill="#444"/><text transform="translate(7.7,207.4) rotate(-90)" font-size="7" text-anchor="middle" fill="#2c2c2c" stroke="#2c2c2c" stroke-width="0.2" font-family="Liberation Sans,sans-serif">5</text><rect x="4.7" y="213.8" width="1.1" height="1.1" fill="#444"/><rect x="3.6" y="220.7" width="3.3" height="0.9" fill="#444"/><rect x="4.7" y="227.5" width="1.1" height="1.1" fill="#444"/><text transform="translate(7.7,234.9) rotate(-90)" font-size="7" text-anchor="middle" fill="#2c2c2c" stroke="#2c2c2c" stroke-width="0.2" font-family="Liberation Sans,sans-serif">6</text><rect x="4.7" y="241.2" width="1.1" height="1.1" fill="#444"/><rect x="3.6" y="248.2" width="3.3" height="0.9" fill="#444"/><rect x="4.7" y="254.9" width="1.1" height="1.1" fill="#444"/><text transform="translate(7.7,262.4) rotate(-90)" font-size="7" text-anchor="middle" fill="#2c2c2c" stroke="#2c2c2c" stroke-width="0.2" font-family="Liberation Sans,sans-serif">7</text><rect x="4.7" y="268.7" width="1.1" height="1.1" fill="#444"/><rect x="3.6" y="275.6" width="3.3" height="0.9" fill="#444"/><rect x="4.7" y="282.4" width="1.1" height="1.1" fill="#444"/><text transform="translate(7.7,289.8) rotate(-90)" font-size="7" text-anchor="middle" fill="#2c2c2c" stroke="#2c2c2c" stroke-width="0.2" font-family="Liberation Sans,sans-serif">8</text><rect x="4.7" y="296.1" width="1.1" height="1.1" fill="#444"/><rect x="3.6" y="303.1" width="3.3" height="0.9" fill="#444"/><rect x="4.7" y="309.8" width="1.1" height="1.1" fill="#444"/><text transform="translate(7.7,317.2) rotate(-90)" font-size="7" text-anchor="middle" fill="#2c2c2c" stroke="#2c2c2c" stroke-width="0.2" font-family="Liberation Sans,sans-serif">9</text><rect x="4.7" y="323.6" width="1.1" height="1.1" fill="#444"/><rect x="3.6" y="330.5" width="3.3" height="0.9" fill="#444"/><rect x="4.7" y="337.3" width="1.1" height="1.1" fill="#444"/><text transform="translate(7.7,344.7) rotate(-90)" font-size="7" text-anchor="middle" fill="#2c2c2c" stroke="#2c2c2c" stroke-width="0.2" font-family="Liberation Sans,sans-serif">10</text><rect x="4.7" y="351.0" width="1.1" height="1.1" fill="#444"/><rect x="3.6" y="358.0" width="3.3" height="0.9" fill="#444"/><rect x="4.7" y="364.7" width="1.1" height="1.1" fill="#444"/><text transform="translate(7.7,372.1) rotate(-90)" font-size="7" text-anchor="middle" fill="#2c2c2c" stroke="#2c2c2c" stroke-width="0.2" font-family="Liberation Sans,sans-serif">11</text><rect x="4.7" y="378.5" width="1.1" height="1.1" fill="#444"/><rect x="3.6" y="385.4" width="3.3" height="0.9" fill="#444"/><rect x="4.7" y="392.2" width="1.1" height="1.1" fill="#444"/><text transform="translate(7.7,399.6) rotate(-90)" font-size="7" text-anchor="middle" fill="#2c2c2c" stroke="#2c2c2c" stroke-width="0.2" font-family="Liberation Sans,sans-serif">12</text><rect x="4.7" y="405.9" width="1.1" height="1.1" fill="#444"/><rect x="3.6" y="412.9" width="3.3" height="0.9" fill="#444"/><rect x="4.7" y="419.6" width="1.1" height="1.1" fill="#444"/><text transform="translate(7.7,427.0) rotate(-90)" font-size="7" text-anchor="middle" fill="#2c2c2c" stroke="#2c2c2c" stroke-width="0.2" font-family="Liberation Sans,sans-serif">13</text><rect x="4.7" y="433.4" width="1.1" height="1.1" fill="#444"/><rect x="3.6" y="440.3" width="3.3" height="0.9" fill="#444"/><rect x="4.7" y="447.1" width="1.1" height="1.1" fill="#444"/><text transform="translate(7.7,454.5) rotate(-90)" font-size="7" text-anchor="middle" fill="#2c2c2c" stroke="#2c2c2c" stroke-width="0.2" font-family="Liberation Sans,sans-serif">14</text><rect x="4.7" y="460.8" width="1.1" height="1.1" fill="#444"/><rect x="3.6" y="467.8" width="3.3" height="0.9" fill="#444"/><rect x="4.7" y="474.5" width="1.1" height="1.1" fill="#444"/><text transform="translate(7.7,482.0) rotate(-90)" font-size="7" text-anchor="middle" fill="#2c2c2c" stroke="#2c2c2c" stroke-width="0.2" font-family="Liberation Sans,sans-serif">15</text><rect x="4.7" y="488.3" width="1.1" height="1.1" fill="#444"/><rect x="3.6" y="495.2" width="3.3" height="0.9" fill="#444"/><rect x="4.7" y="502.0" width="1.1" height="1.1" fill="#444"/><text transform="translate(7.7,509.4) rotate(-90)" font-size="7" text-anchor="middle" fill="#2c2c2c" stroke="#2c2c2c" stroke-width="0.2" font-family="Liberation Sans,sans-serif">16</text><rect x="4.7" y="515.7" width="1.1" height="1.1" fill="#444"/><rect x="3.6" y="522.7" width="3.3" height="0.9" fill="#444"/></svg><div class="r" style="left:306px;top:147px;width:593px;height:535px;background:#fff;border:1px solid #c6c6c6;box-sizing:border-box"></div><span class="t" style="left:388.0px;top:215.3px;font-size:11.67px;color:#000;font-weight:400;font-style:normal;font-family:'Liberation Sans',sans-serif;letter-spacing:0.03px;">Solvetic Internet</span><div class="r" style="left:0px;top:690.8px;width:1200px;height:1.2px;background:#2A6CB2;"></div><div id="status"></div><span class="t" style="left:6.0px;top:675.5px;font-size:8.42px;color:#444;font-weight:400;font-style:normal;font-family:'Liberation Sans',sans-serif;letter-spacing:-0.18px;-webkit-text-stroke:0.16px #444;">Página 1 de 1</span><span class="t" style="left:70.0px;top:675.5px;font-size:8.6px;color:#444;font-weight:400;font-style:normal;font-family:'Liberation Sans',sans-serif;letter-spacing:-0.13px;-webkit-text-stroke:0.16px #444;">2 palabras</span><span class="t" style="left:123.0px;top:675.5px;font-size:8.51px;color:#444;font-weight:400;font-style:normal;font-family:'Liberation Sans',sans-serif;letter-spacing:-0.16px;-webkit-text-stroke:0.16px #444;">Español (Colombia)</span><span class="t" style="left:910.7px;top:675.5px;font-size:8.55px;color:#444;font-weight:400;font-style:normal;font-family:'Liberation Sans',sans-serif;letter-spacing:-0.15px;-webkit-text-stroke:0.16px #444;">Concentración</span><span class="t" style="left:1166.7px;top:675.5px;font-size:8.02px;color:#333;font-weight:400;font-style:normal;font-family:'Liberation Sans',sans-serif;letter-spacing:-0.51px;-webkit-text-stroke:0.16px #333;">100%</span><div class="r" style="left:1002px;top:676px;width:28.7px;height:15px;background:#c8c8c8;"></div><div class="r" style="left:1065px;top:683px;width:5.5px;height:1px;background:#444;"></div><div class="r" style="left:1074px;top:683.3px;width:72.7px;height:0.8px;background:#ababab;"></div><div class="r" style="left:1109.2px;top:679.6px;width:3.2px;height:8.2px;background:#5a5a5a;border-radius:0.5px"></div><div class="r" style="left:1150.5px;top:683px;width:5.5px;height:1px;background:#444;"></div><div class="r" style="left:1152.8px;top:680.7px;width:1px;height:5.6px;background:#444;"></div><div class="r" style="left:1142.5px;top:629px;width:48.6px;height:48.6px;border-radius:50%;background:#fff;box-shadow:0 0 1.5px rgba(120,140,170,.7)"></div><svg class="i" style="left:1142.5px;top:629px;" width="48.6" height="48.6" viewBox="0 0 48.6 48.6"><path d="M25.5 34.3C25.1 33.8 24.2 32.2 23.1 31.4C22.0 30.5 20.5 29.7 19.0 29.0C17.5 28.3 15.7 28.2 14.2 27.2C12.7 26.2 11.1 24.6 10.1 23.1C9.1 21.5 8.3 19.6 8.1 17.7C7.8 15.9 7.9 13.6 8.5 11.8C9.2 10.0 10.5 8.3 11.9 7.1C13.2 5.8 14.7 5.0 16.6 4.3C18.5 3.7 20.9 3.2 23.1 3.2C25.3 3.1 27.8 3.6 29.6 4.1C31.5 4.7 33.1 5.3 34.4 6.5C35.6 7.7 36.7 9.5 37.1 11.2C37.5 12.9 37.1 14.8 36.7 16.5C36.4 18.3 35.6 20.1 35.0 21.9C34.4 23.7 33.6 25.7 33.2 27.2C32.8 28.7 32.5 29.8 32.7 30.8C32.9 31.7 34.7 32.2 34.4 32.9C34.1 33.6 32.1 34.1 30.8 34.9C29.5 35.7 27.5 37.0 26.7 37.9C25.8 38.7 25.3 39.6 25.8 39.9C26.3 40.2 28.0 39.9 29.6 39.6C31.3 39.4 34.1 38.3 35.6 38.1C37.1 37.9 38.3 38.0 38.6 38.6C38.9 39.1 38.2 40.5 37.3 41.4C36.4 42.4 34.6 43.6 33.2 44.4C31.7 45.2 29.4 45.9 28.7 46.2" fill="none" stroke="#5088C6" stroke-width="1.9" stroke-linecap="round" stroke-linejoin="round"/></svg><svg class="i" style="left:114px;top:7.7px;" width="12" height="12" viewBox="0 0 12 12"><path d="M1.2 0.6H9.2L11.4 2.8V10.6a.8 .8 0 0 1-.8 .8H1.4a.8 .8 0 0 1-.8-.8V1.2a.6 .6 0 0 1 .6-.6Z" fill="none" stroke="#fff" stroke-width="1.1"/><path d="M2.8 0.8V4.6H8.6V0.8" fill="none" stroke="#fff" stroke-width="1.1"/><path d="M3.3 11.2V7.9H8.7V11.2" fill="none" stroke="#fff" stroke-width="1.1"/></svg><svg class="i" style="left:135.5px;top:7.5px;" width="12" height="12.5" viewBox="0 0 12 12.5"><path d="M0.9 1V5H5" fill="none" stroke="#4383C4" stroke-width="1.1"/><path d="M1.1 4.7C2.6 2.4 4.6 1 6.6 1.1C9 1.2 10.4 3.2 10 5.2C9.6 7.4 6.6 9.6 4.2 11.6" fill="none" stroke="#4383C4" stroke-width="1.1"/></svg><svg class="i" style="left:150.3px;top:10.700000000000001px;" width="6" height="4" viewBox="0 0 6 4"><path d="M1 0.7 L3 2.7 L5 0.7" fill="none" stroke="#4383C4" stroke-width="1.2"/></svg><svg class="i" style="left:162.5px;top:7.5px;" width="13" height="13" viewBox="0 0 13 13"><path d="M3.6 0.8H6.6V4" fill="none" stroke="#4383C4" stroke-width="1.1"/><path d="M9.4 1.9A5.3 5.3 0 1 1 4.6 1.6" fill="none" stroke="#4383C4" stroke-width="1.1"/></svg><svg class="i" style="left:184px;top:7.9px;" width="13" height="11.6" viewBox="0 0 13 11.6"><rect x="1.1" y="1.1" width="10.8" height="8.4" rx="1.2" fill="#0A4588" stroke="#B7C7DE" stroke-width="2.2"/><path d="M4.4 5.2L8.4 9.2H6.2L4.4 11.4Z" fill="#fff" stroke="#0A4588" stroke-width="0.5"/></svg><div class="r" style="left:208.3px;top:9.7px;width:5.4px;height:1.1px;background:#fff;"></div><svg class="i" style="left:208px;top:11.8px;" width="6" height="4" viewBox="0 0 6 4"><path d="M0.6 0.6L3 3L5.4 0.6" fill="none" stroke="#fff" stroke-width="1.2"/></svg><svg class="i" style="left:423px;top:12.3px;" width="4" height="2.4" viewBox="0 0 4 2.4"><path d="M0 0H4L2 2.3Z" fill="#fff"/></svg><svg class="i" style="left:486px;top:7.5px;" width="11" height="11" viewBox="0 0 11 11"><circle cx="6.5" cy="4.2" r="3.4" fill="none" stroke="#1B3F7C" stroke-width="1.25"/><path d="M4.2 6.6L0.6 10.4" stroke="#1B3F7C" stroke-width="1.35"/></svg><svg class="i" style="left:1077px;top:8.7px;" width="10" height="7.6" viewBox="0 0 10 7.6"><rect x="0" y="0" width="10" height="7.6" rx="1.2" fill="#fff"/><rect x="1.1" y="2.3" width="7.8" height="4.2" fill="#0157A3"/><path d="M5 2.8L6.9 4.7H5.8V6.2H4.2V4.7H3.1Z" fill="#fff"/></svg><div class="r" style="left:1111.6px;top:11.3px;width:7.6px;height:1.6px;background:#A9B6DE;"></div><div class="r" style="left:1145px;top:8.3px;width:7.8px;height:7.9px;border:1.1px solid #fff;border-radius:1.5px;box-sizing:border-box"></div><svg class="i" style="left:1178.7px;top:8.7px;" width="7.6" height="7.6" viewBox="0 0 7.6 7.6"><path d="M0.3 0.3L7.3 7.3M7.3 0.3L0.3 7.3" stroke="#fff" stroke-width="1.1"/></svg><svg class="i" style="left:1127px;top:33px;" width="8.5" height="8" viewBox="0 0 8.5 8"><path d="M3 3H0.9V7.4H7.2V5.2" fill="none" stroke="#114E9E" stroke-width="0.9"/><path d="M2.8 5.6C3 3.6 4.3 2.4 6 2.4H7.6M6 0.7L7.8 2.4L6 4.1" fill="none" stroke="#114E9E" stroke-width="0.9"/></svg><svg class="i" style="left:13px;top:52.5px;" width="21" height="23" viewBox="0 0 21 23"><path d="M4.2 3.9H2a.6 .6 0 0 0-.6 .6V19.4a.6 .6 0 0 0 .6 .6H10" fill="none" stroke="#E8912D" stroke-width="1.25"/><path d="M12.6 3.9H14.8a.6 .6 0 0 1 .6 .6V9.6" fill="none" stroke="#E8912D" stroke-width="1.25"/><path d="M3.9 5.8V3.6a.5 .5 0 0 1 .5-.5H5.9C6.2 1.6 7.2 .7 8.4 .7S10.6 1.6 10.9 3.1H12.4a.5 .5 0 0 1 .5 .5V5.8Z" fill="#fff" stroke="#6a6a6a" stroke-width="0.9"/><rect x="10.8" y="10" width="9.3" height="11.4" rx="0.5" fill="#fff" stroke="#555" stroke-width="1.2"/></svg><svg class="i" style="left:41px;top:52.5px;" width="8" height="11.5" viewBox="0 0 8 11.5"><path d="M1.6 0.3L5.6 8.6M6.4 0.3L2.4 8.6" fill="none" stroke="#9a9a9a" stroke-width="0.9"/><circle cx="1.8" cy="9.8" r="1.3" fill="none" stroke="#9a9a9a" stroke-width="0.9"/><circle cx="6.2" cy="9.8" r="1.3" fill="none" stroke="#9a9a9a" stroke-width="0.9"/></svg><svg class="i" style="left:39px;top:69.3px;" width="12.5" height="12.5" viewBox="0 0 12.5 12.5"><path d="M4.4 9.8H0.6V0.6H5.2L7 2.4V3.6" fill="none" stroke="#9a9a9a" stroke-width="0.9"/><path d="M4.6 3.4H9L11.6 6V11.8H4.6Z" fill="#fff" stroke="#9a9a9a" stroke-width="0.9"/><path d="M8.8 3.6V6.2H11.4" fill="none" stroke="#9a9a9a" stroke-width="0.8"/><path d="M6.6 8.2H9.6M6.6 9.8H9.6" stroke="#9a9a9a" stroke-width="0.7"/></svg><svg class="i" style="left:39px;top:87px;" width="12.5" height="11.5" viewBox="0 0 12.5 11.5"><path d="M0.7 5.4L5.3 2.7L8.6 8L5.4 10.7Z" fill="#fff" stroke="#E8912D" stroke-width="1.3" stroke-linejoin="round"/><path d="M3 7.6L6.2 9.2" stroke="#E8912D" stroke-width="0.9"/><path d="M5.9 3.1L8.3 1.5L10.9 5.2L8.6 6.9Z" fill="#666" stroke="#3c3c3c" stroke-width="0.9" stroke-linejoin="round"/><path d="M8.6 1.5L10.6 0.4L12 2.2L10.6 4" fill="none" stroke="#3c3c3c" stroke-width="1"/></svg><svg class="i" style="left:254px;top:58.6px;" width="4" height="3" viewBox="0 0 4 3"><path d="M0.4 2.5L2 0.8L3.6 2.5" fill="none" stroke="#2B8FE0" stroke-width="1.3"/></svg><svg class="i" style="left:271px;top:58.6px;" width="4" height="3" viewBox="0 0 4 3"><path d="M0.4 0.6L2 2.3L3.6 0.6" fill="none" stroke="#2B8FE0" stroke-width="1.3"/></svg><svg class="i" style="left:322.3px;top:62.5px;" width="8.5" height="7.5" viewBox="0 0 8.5 7.5"><path d="M5.2 0.6L7.9 2.6L3.4 6.9L0.7 4.9Z" fill="#B146C2" stroke="#B146C2" stroke-width="1.1" stroke-linejoin="round"/><path d="M3.3 3.6L5.3 5" stroke="#fff" stroke-width="0.9"/></svg><svg class="i" style="left:280.5px;top:81px;" width="10" height="8.5" viewBox="0 0 10 8.5"><path d="M6.9 0.6L9.3 2.2L4.6 7H2.2L1.8 5.4Z" fill="#fff" stroke="#333" stroke-width="1.1" stroke-linejoin="round"/><path d="M2 7L0.6 8.4H3.4" stroke="#333" fill="#333" stroke-width="0.8"/></svg><svg class="i" style="left:1064.5px;top:51.5px;" width="11.5" height="11.5" viewBox="0 0 11.5 11.5"><circle cx="7.3" cy="4.1" r="3.5" fill="none" stroke="#444" stroke-width="1"/><path d="M4.8 6.6L0.5 11" stroke="#444" stroke-width="1.1"/></svg><svg class="i" style="left:1063.5px;top:68px;" width="11.5" height="12.5" viewBox="0 0 11.5 12.5"><text x="4.3" y="6" font-size="7.6" font-weight="700" fill="#BF4FC0" font-family="Liberation Sans,sans-serif">b</text><text x="7.2" y="11.9" font-size="8.4" font-weight="700" fill="#1A88D8" font-family="Liberation Sans,sans-serif">c</text><path d="M2.2 4.3C0.2 5.4 0 8.2 2.2 9.2C3.2 9.6 4.4 9.5 5.6 9.5" fill="none" stroke="#1A88D8" stroke-width="1.3"/><path d="M3.8 7.3L6 9.5L3.8 11.8" fill="none" stroke="#1A88D8" stroke-width="1.4"/></svg><svg class="i" style="left:1065.4px;top:85.7px;" width="8" height="11" viewBox="0 0 8 11"><path d="M0.6 0.8V8.6L2.6 6.8L4.2 10.2L5.4 9.6L3.9 6.4H6.6Z" fill="#fff" stroke="#333" stroke-width="0.9" stroke-linejoin="round"/></svg><svg class="i" style="left:208.2px;top:678.7px;" width="11" height="10.2" viewBox="0 0 11 10.2"><rect x="0.2" y="0.3" width="10.2" height="8.6" rx="0.8" fill="#8e8e8e"/><rect x="0.2" y="0.3" width="10.2" height="1.8" rx="0.6" fill="#6e6e6e"/><path d="M1.8 3.6V7.4" stroke="#c8c8c8" stroke-width="1"/><circle cx="7.3" cy="6.3" r="3.3" fill="#fff" stroke="#6a6a6a" stroke-width="1.1"/><circle cx="7.3" cy="6.3" r="1.1" fill="#2a1a1a"/></svg><svg class="i" style="left:897px;top:678.3px;" width="11" height="10.3" viewBox="0 0 11 10.3"><path d="M0.5 2.4V0.5H2.4M8.6 0.5H10.5V2.4M10.5 7.9V9.8H8.6M2.4 9.8H0.5V7.9" fill="none" stroke="#555" stroke-width="0.9"/><path d="M3 1.8H6.6L8.2 3.4V8.6H3Z" fill="none" stroke="#555" stroke-width="0.9"/></svg><svg class="i" style="left:982.2px;top:678.2px;" width="10" height="9" viewBox="0 0 10 9"><path d="M5 1.3C3.8 0.4 2 0.4 0.5 0.9V8C2 7.5 3.8 7.5 5 8.5C6.2 7.5 8 7.5 9.5 8V0.9C8 0.4 6.2 0.4 5 1.3Z" fill="#cfcfcf" stroke="#555" stroke-width="0.9"/><path d="M5 1.3V8.4" stroke="#555" stroke-width="0.9"/><path d="M2.6 1.6V7M7.4 1.6V7" stroke="#fff" stroke-width="0.9"/></svg><svg class="i" style="left:1012.2px;top:678px;" width="8.6" height="10.3" viewBox="0 0 8.6 10.3"><rect x="0.5" y="0.5" width="7.6" height="9.3" rx="1" fill="#b4b4b4" stroke="#4a4a4a" stroke-width="0.9"/><path d="M2 2.4H6.6M2 4.3H6.6M2 6.2H6.6M2 8H6.6" stroke="#777" stroke-width="0.7"/></svg><svg class="i" style="left:1040.6px;top:678px;" width="10.8" height="10" viewBox="0 0 10.8 10"><path d="M5 8.8H0.5V0.5H8.8V4" fill="#d4d4d4" stroke="#555" stroke-width="0.9"/><path d="M2.4 0.6V8.6" stroke="#999" stroke-width="1.2"/><circle cx="7.4" cy="6.8" r="3" fill="#4a4a4a"/><ellipse cx="7.4" cy="6.8" rx="1" ry="2.2" fill="none" stroke="#ccc" stroke-width="0.6"/></svg></div></body></html>
